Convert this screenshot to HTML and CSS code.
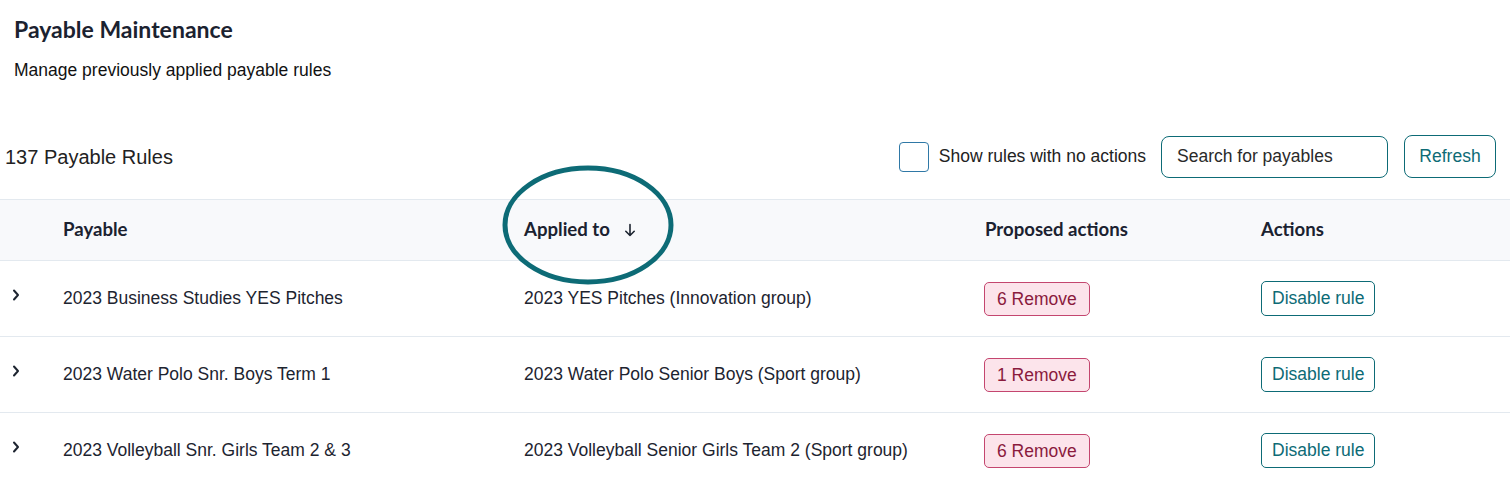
FILE: index.html
```html
<!DOCTYPE html>
<html lang="en">
<head>
<meta charset="utf-8">
<title>Payable Maintenance</title>
<link rel="stylesheet" href="styles.css">
</head>
<body>
<header class="page-head">
  <h1 class="title">Payable Maintenance</h1>
  <p class="subtitle">Manage previously applied payable rules</p>
</header>

<section class="toolbar">
  <div class="count">137 Payable Rules</div>
  <div class="controls">
    <label class="check">
      <span class="box"></span>
      <span class="check-label">Show rules with no actions</span>
    </label>
    <input class="search" type="text" placeholder="Search for payables">
    <button class="btn-outline refresh">Refresh</button>
  </div>
</section>

<div class="table">
  <div class="row head">
    <div class="cell"></div>
    <div class="cell">Payable</div>
    <div class="cell sort-cell">
      <span>Applied to</span>
      <svg class="sort-arrow" width="12" height="14" viewBox="0 0 12 14" fill="none" stroke="#1d2430" stroke-width="1.6" stroke-linecap="round" stroke-linejoin="round"><path d="M6 1.5v11M1.8 8.3L6 12.5l4.2-4.2"/></svg>
      <svg class="circle" width="176" height="124" viewBox="0 0 176 124"><ellipse cx="88" cy="62" rx="83" ry="57" fill="none" stroke="#0d6b76" stroke-width="5"/></svg>
    </div>
    <div class="cell">Proposed actions</div>
    <div class="cell">Actions</div>
  </div>

  <div class="row">
    <div class="cell chev"><svg width="10" height="14" viewBox="0 0 10 14" fill="none" stroke="#1d2430" stroke-width="2" stroke-linecap="round" stroke-linejoin="round"><path d="M3 2.5l4 4.5-4 4.5"/></svg></div>
    <div class="cell">2023 Business Studies YES Pitches</div>
    <div class="cell">2023 YES Pitches (Innovation group)</div>
    <div class="cell"><span class="badge">6 Remove</span></div>
    <div class="cell"><button class="btn-outline small">Disable rule</button></div>
  </div>

  <div class="row">
    <div class="cell chev"><svg width="10" height="14" viewBox="0 0 10 14" fill="none" stroke="#1d2430" stroke-width="2" stroke-linecap="round" stroke-linejoin="round"><path d="M3 2.5l4 4.5-4 4.5"/></svg></div>
    <div class="cell">2023 Water Polo Snr. Boys Term 1</div>
    <div class="cell">2023 Water Polo Senior Boys (Sport group)</div>
    <div class="cell"><span class="badge">1 Remove</span></div>
    <div class="cell"><button class="btn-outline small">Disable rule</button></div>
  </div>

  <div class="row">
    <div class="cell chev"><svg width="10" height="14" viewBox="0 0 10 14" fill="none" stroke="#1d2430" stroke-width="2" stroke-linecap="round" stroke-linejoin="round"><path d="M3 2.5l4 4.5-4 4.5"/></svg></div>
    <div class="cell">2023 Volleyball Snr. Girls Team 2 &amp; 3</div>
    <div class="cell">2023 Volleyball Senior Girls Team 2 (Sport group)</div>
    <div class="cell"><span class="badge">6 Remove</span></div>
    <div class="cell"><button class="btn-outline small">Disable rule</button></div>
  </div>
</div>
</body>
</html>
```

FILE: styles.css
```css
* { box-sizing: border-box; }

html, body {
  margin: 0;
  background: #ffffff;
  color: #1d2430;
  font-family: "Liberation Sans", Arial, sans-serif;
  overflow: hidden;
}

.page-head {
  padding: 15px 14px 0;
}

.title {
  margin: 0;
  font-family: Lato, "Open Sans", sans-serif;
  font-weight: 700;
  font-size: 23px;
  line-height: 28px;
  color: #1b2230;
}

.subtitle {
  margin: 17px 0 0;
  font-size: 17.5px;
  line-height: 20px;
  color: #111;
}

.toolbar {
  margin-top: 55px;
  display: flex;
  align-items: center;
  justify-content: space-between;
  padding: 0 14px 0 5px;
  height: 43px;
}

.count {
  font-size: 20px;
  padding-top: 2px;
  color: #222;
}

.controls {
  display: flex;
  align-items: center;
}

.check {
  display: flex;
  align-items: center;
  gap: 10px;
}

.box {
  width: 30px;
  height: 30px;
  border: 1.5px solid #2f78a6;
  border-radius: 4px;
  background: #fff;
}

.check-label {
  font-size: 17.5px;
  color: #222;
}

.search {
  margin-left: 15px;
  width: 227px;
  height: 42px;
  border: 1.5px solid #0d6b76;
  border-radius: 8px;
  padding: 0 15px;
  font-family: "Liberation Sans", Arial, sans-serif;
  font-size: 17.5px;
  color: #222;
  background: #fff;
}

.search::placeholder {
  color: #2a2a2a;
  opacity: 1;
}

.btn-outline {
  font-family: "Liberation Sans", Arial, sans-serif;
  background: #fff;
  border: 1.5px solid #0d6b76;
  color: #0d6b76;
  cursor: pointer;
}

.refresh {
  margin-left: 16px;
  width: 92px;
  height: 43px;
  border-radius: 8px;
  font-size: 17.5px;
}

.table {
  margin-top: 21px;
}

.row {
  display: grid;
  grid-template-columns: 63px 461px 461px 276px 1fr;
  align-items: center;
  height: 76px;
  border-bottom: 1px solid #e3e9ef;
  font-size: 17.5px;
  color: #1d2430;
}

.row.head {
  height: 62px;
  padding-bottom: 3px;
  background: #f8f9fb;
  border-top: 1px solid #e3e9ef;
  font-family: Lato, "Open Sans", sans-serif;
  font-weight: 700;
  font-size: 18.6px;
  color: #1b2230;
}

.sort-cell {
  position: relative;
  align-self: stretch;
  display: flex;
  align-items: center;
  gap: 14px;
}

.sort-arrow {
  margin-top: 3px;
}

.circle {
  position: absolute;
  left: -24px;
  top: -37px;
  pointer-events: none;
}

.chev {
  display: flex;
  padding-left: 11px;
  margin-top: -8px;
}

.badge {
  display: inline-block;
  height: 34px;
  line-height: 32px;
  padding: 0 12px;
  margin-left: -1px;
  border: 1px solid #c4466f;
  border-radius: 5px;
  background: #fce4eb;
  color: #8a1a3d;
  font-size: 17.5px;
}

.small {
  height: 35px;
  padding: 0 10px;
  border-radius: 5px;
  font-size: 17.5px;
  border-width: 1px;
}
```
